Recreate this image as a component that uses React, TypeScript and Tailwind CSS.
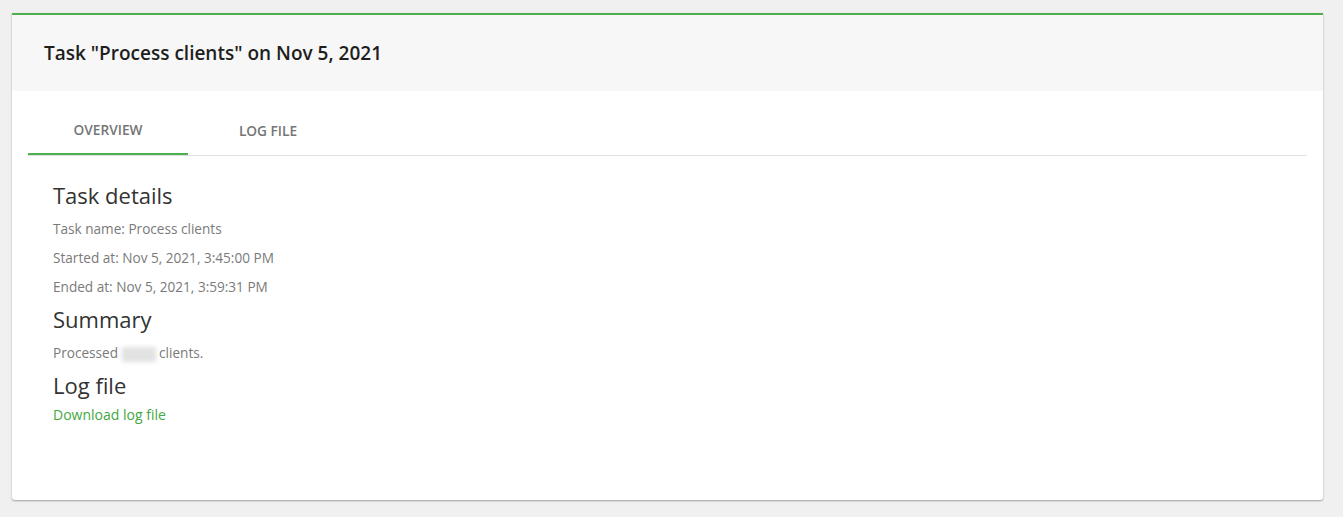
const details = [
  "Task name: Process clients",
  "Started at: Nov 5, 2021, 3:45:00 PM",
  "Ended at: Nov 5, 2021, 3:59:31 PM",
];

const App = () => {
  return (
    <div className="min-h-[517px] bg-[#f0f0f0] pl-3 pr-5 pt-[13px] font-['Open_Sans',sans-serif]">
      <div className="overflow-hidden rounded-b-[3px] border-t-2 border-[#4caf50] bg-white shadow-[0_1px_2px_rgba(0,0,0,0.35)]">
        <div className="flex h-[76px] items-center bg-[#f7f7f7] px-8">
          <h1 className="text-[19px] font-semibold text-[#1e1e1e]">
            Task "Process clients" on Nov 5, 2021
          </h1>
        </div>

        <div className="px-4 pt-4">
          <div className="flex border-b border-[#e0e0e0]">
            <button className="h-12 w-40 border-b-2 border-[#4caf50] -mb-px text-[13.7px] font-semibold uppercase text-[#757575]">
              Overview
            </button>
            <button className="h-12 w-40 text-[13.7px] font-semibold uppercase text-[#757575]">
              Log file
            </button>
          </div>
        </div>

        <div className="px-[41px] pt-[26px] pb-[75px]">
          <h2 className="text-[22px] leading-[26px] text-[#333]">Task details</h2>
          {details.map((line, i) => (
            <p
              key={line}
              className={`${i === 0 ? "mt-[11px]" : "mt-[9px]"} text-[13.6px] leading-[20px] text-[#7a7a7a]`}
            >
              {line}
            </p>
          ))}

          <h2 className="mt-[9px] text-[22px] leading-[26px] text-[#333]">Summary</h2>
          <p className="mt-[11px] text-[13.6px] leading-[20px] text-[#7a7a7a]">
            Processed{" "}
            <span className="inline-block h-[15px] w-[34px] align-middle bg-[#e2e2e2] blur-[2px]" />{" "}
            clients.
          </p>

          <h2 className="mt-[9px] text-[22px] leading-[26px] text-[#333]">Log file</h2>
          <a href="#" className="mt-[7px] block text-[14px] leading-[20px] font-medium text-[#43a843]">
            Download log file
          </a>
        </div>
      </div>
    </div>
  );
};

export default App;
